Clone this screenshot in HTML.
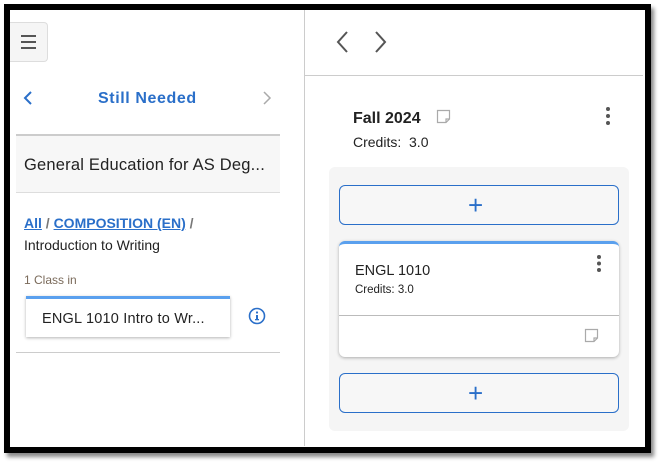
<!DOCTYPE html>
<html><head><meta charset="utf-8"><style>
*{box-sizing:border-box;margin:0;padding:0}
body{width:663px;height:465px;background:#fff;font-family:"Liberation Sans",sans-serif;position:relative;overflow:hidden;color:#222}
.frame{position:absolute;left:4px;top:4px;width:647px;height:449px;border:6px solid #000;box-shadow:3px 4px 4px #888;background:#fff}
.a{position:absolute}
.burger{left:10px;top:22px;width:38px;height:40px;background:#f5f5f5;border:1px solid #ddd;border-left:none;border-radius:0 4px 4px 0}
.burger i{position:absolute;left:11px;width:15px;height:2px;background:#555}
.vdiv{left:304px;top:10px;width:1px;height:436px;background:#ccc}
.blue{color:#2a6fc9}
.gray{left:16px;top:134px;width:264px;height:59px;background:#f7f7f7;border-top:2px solid #ccc;border-bottom:1px solid #ddd;font-size:16.5px;padding:20px 0 0 8px;color:#222;white-space:nowrap;letter-spacing:.2px}
.card{left:26px;top:296px;width:204px;height:41px;border-top:3px solid #5aa0ee;box-shadow:0 1px 3px rgba(0,0,0,.3);font-size:14.5px;padding:12px 0 0 16px;white-space:nowrap;background:#fff;letter-spacing:.2px}
.add{left:339px;width:280px;height:40px;border:1px solid #2a6fc9;border-radius:6px;background:#f7f7f7}
</style></head><body>
<div class="frame"></div>
<div class="a burger"><i style="top:12px"></i><i style="top:18px"></i><i style="top:24px"></i></div>
<div class="a vdiv"></div>
<svg class="a" style="left:22px;top:90px" width="12" height="16"><path d="M9 2 L3 8 L9 14" stroke="#2a6fc9" stroke-width="2" fill="none"/></svg>
<div class="a blue" style="left:98px;top:90px;font-size:16px;font-weight:bold;letter-spacing:.6px">Still Needed</div>
<svg class="a" style="left:261px;top:90px" width="12" height="16"><path d="M3 2 L9 8 L3 14" stroke="#aaa" stroke-width="1.5" fill="none"/></svg>
<div class="a gray">General Education for AS Deg...</div>
<div class="a" style="left:24px;top:215px;font-size:14px;font-weight:bold;color:#777"><span class="blue" style="text-decoration:underline">All</span> / <span class="blue" style="text-decoration:underline">COMPOSITION (EN)</span> /</div>
<div class="a" style="left:24px;top:237px;font-size:14px">Introduction to Writing</div>
<div class="a" style="left:24px;top:273px;font-size:12px;color:#7a6a5a">1 Class in</div>
<div class="a card">ENGL 1010 Intro to Wr...</div>
<svg class="a" style="left:248px;top:307px" width="18" height="18"><circle cx="9" cy="9" r="7.5" stroke="#2a6fc9" stroke-width="1.6" fill="none"/><rect x="8" y="8" width="2" height="5" fill="#2a6fc9"/><circle cx="9" cy="5.5" r="1.1" fill="#2a6fc9"/><rect x="7" y="12" width="4" height="1.3" fill="#2a6fc9"/></svg>
<div class="a" style="left:16px;top:352px;width:264px;height:1px;background:#ccc"></div>

<svg class="a" style="left:333px;top:30px" width="60" height="24"><path d="M14 2 L5 12 L14 22" stroke="#555" stroke-width="2" fill="none"/><path d="M43 2 L52 12 L43 22" stroke="#555" stroke-width="2" fill="none"/></svg>
<div class="a" style="left:305px;top:75px;width:338px;height:1px;background:#ccc"></div>
<div class="a" style="left:353px;top:110px;font-size:16px;font-weight:bold">Fall 2024</div>
<svg class="a" style="left:436px;top:109px" width="16" height="16"><path d="M1.5 1.5 H13.5 V10 L10 13.5 H1.5 Z M13.5 10 H10 V13.5" stroke="#aaa" stroke-width="1.2" fill="none"/></svg>
<svg class="a" style="left:604px;top:106px" width="8" height="22"><circle cx="4" cy="3" r="2" fill="#555"/><circle cx="4" cy="10" r="2" fill="#555"/><circle cx="4" cy="17" r="2" fill="#555"/></svg>
<div class="a" style="left:353px;top:134px;font-size:14px">Credits:&nbsp; 3.0</div>
<div class="a" style="left:329px;top:167px;width:300px;height:264px;background:#f5f5f5;border-radius:6px"></div>
<div class="a add" style="top:185px"></div>
<div class="a blue" style="left:468px;top:190px;font-size:26px;font-weight:300">+</div>
<div class="a" style="left:339px;top:241px;width:280px;height:116px;background:#fff;border-top:3px solid #5aa0ee;border-radius:6px;box-shadow:0 1px 3px rgba(0,0,0,.3)"></div>
<div class="a" style="left:355px;top:263px;font-size:14.5px">ENGL 1010</div>
<div class="a" style="left:355px;top:284px;font-size:11.5px">Credits: 3.0</div>
<svg class="a" style="left:595px;top:254px" width="8" height="20"><circle cx="4" cy="3" r="2" fill="#555"/><circle cx="4" cy="9.5" r="2" fill="#555"/><circle cx="4" cy="16" r="2" fill="#555"/></svg>
<div class="a" style="left:339px;top:315px;width:280px;height:1px;background:#bbb"></div>
<svg class="a" style="left:584px;top:328px" width="16" height="16"><path d="M1.5 1.5 H13.5 V10 L10 13.5 H1.5 Z M13.5 10 H10 V13.5" stroke="#aaa" stroke-width="1.2" fill="none"/></svg>
<div class="a add" style="top:373px"></div>
<div class="a blue" style="left:468px;top:378px;font-size:26px;font-weight:300">+</div>
</body></html>
